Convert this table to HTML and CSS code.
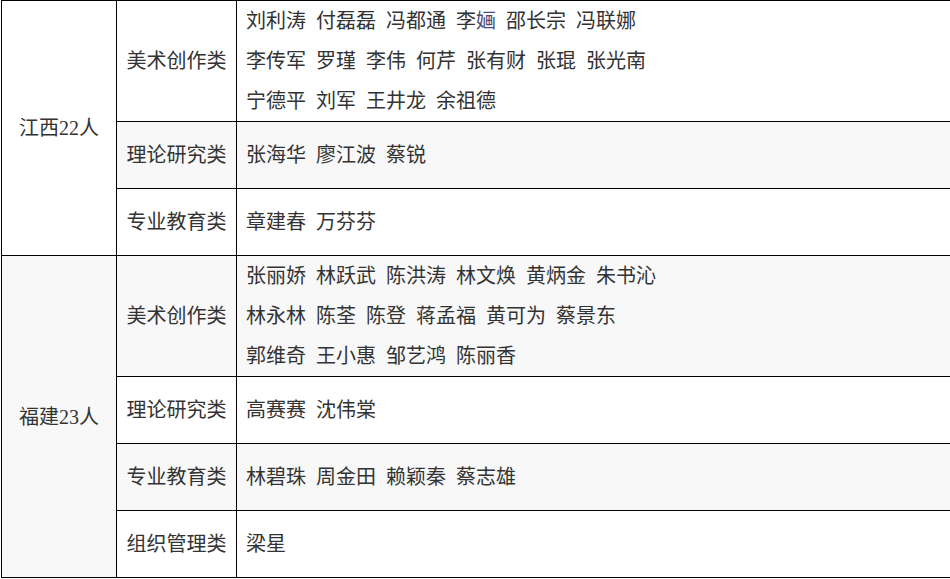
FILE: index.html
```html
<!DOCTYPE html>
<html lang="zh-CN">
<head>
<meta charset="utf-8">
<title>名单</title>
<link rel="stylesheet" href="styles.css">
</head>
<body>
<table class="roster">
  <colgroup>
    <col class="c-region">
    <col class="c-cat">
    <col class="c-names">
  </colgroup>
  <tbody>
    <tr class="tall">
      <td class="region" rowspan="3">江西22人</td>
      <td class="cat">美术创作类</td>
      <td class="names">
        <div class="line">刘利涛&nbsp;&nbsp;付磊磊&nbsp;&nbsp;冯都通&nbsp;&nbsp;李<span class="rare">婳</span>&nbsp;&nbsp;邵长宗&nbsp;&nbsp;冯联娜</div>
        <div class="line">李传军&nbsp;&nbsp;罗瑾&nbsp;&nbsp;李伟&nbsp;&nbsp;何芹&nbsp;&nbsp;张有财&nbsp;&nbsp;张琨&nbsp;&nbsp;张光南</div>
        <div class="line">宁德平&nbsp;&nbsp;刘军&nbsp;&nbsp;王井龙&nbsp;&nbsp;余祖德</div>
      </td>
    </tr>
    <tr class="short alt">
      <td class="cat">理论研究类</td>
      <td class="names"><div class="line">张海华&nbsp;&nbsp;廖江波&nbsp;&nbsp;蔡锐</div></td>
    </tr>
    <tr class="short">
      <td class="cat">专业教育类</td>
      <td class="names"><div class="line">章建春&nbsp;&nbsp;万芬芬</div></td>
    </tr>
    <tr class="tall alt">
      <td class="region" rowspan="4">福建23人</td>
      <td class="cat">美术创作类</td>
      <td class="names">
        <div class="line">张丽娇&nbsp;&nbsp;林跃武&nbsp;&nbsp;陈洪涛&nbsp;&nbsp;林文焕&nbsp;&nbsp;黄炳金&nbsp;&nbsp;朱书沁</div>
        <div class="line">林永林&nbsp;&nbsp;陈荃&nbsp;&nbsp;陈登&nbsp;&nbsp;蒋孟福&nbsp;&nbsp;黄可为&nbsp;&nbsp;蔡景东</div>
        <div class="line">郭维奇&nbsp;&nbsp;王小惠&nbsp;&nbsp;邹艺鸿&nbsp;&nbsp;陈丽香</div>
      </td>
    </tr>
    <tr class="short">
      <td class="cat">理论研究类</td>
      <td class="names"><div class="line">高赛赛&nbsp;&nbsp;沈伟棠</div></td>
    </tr>
    <tr class="short alt">
      <td class="cat">专业教育类</td>
      <td class="names"><div class="line">林碧珠&nbsp;&nbsp;周金田&nbsp;&nbsp;赖颖秦&nbsp;&nbsp;蔡志雄</div></td>
    </tr>
    <tr class="short last">
      <td class="cat">组织管理类</td>
      <td class="names"><div class="line">梁星</div></td>
    </tr>
  </tbody>
</table>
</body>
</html>
```

FILE: styles.css
```css
html, body {
  margin: 0;
  padding: 0;
  overflow: hidden;
  background: #ffffff;
}

body {
  font-family: "Liberation Serif", "Noto Sans CJK SC", sans-serif;
  font-size: 20px;
  color: #333333;
}

.roster {
  border-collapse: collapse;
  width: 952px;
  margin-left: 1px;
  table-layout: fixed;
}

.c-region { width: 115px; }
.c-cat { width: 120px; }

.roster td {
  border: 1px solid #000000;
  padding: 0;
  vertical-align: middle;
  line-height: 40px;
  white-space: nowrap;
}

.roster tr.alt td {
  background: #f8f8f8;
}

.region {
  text-align: center;
}

.cat {
  text-align: center;
}

.names {
  padding-left: 9px !important;
  text-align: left;
}

.tall td {
  height: 120px;
}

.short td {
  height: 66px;
}

.rare {
  color: #4a4a7a;
}
```
